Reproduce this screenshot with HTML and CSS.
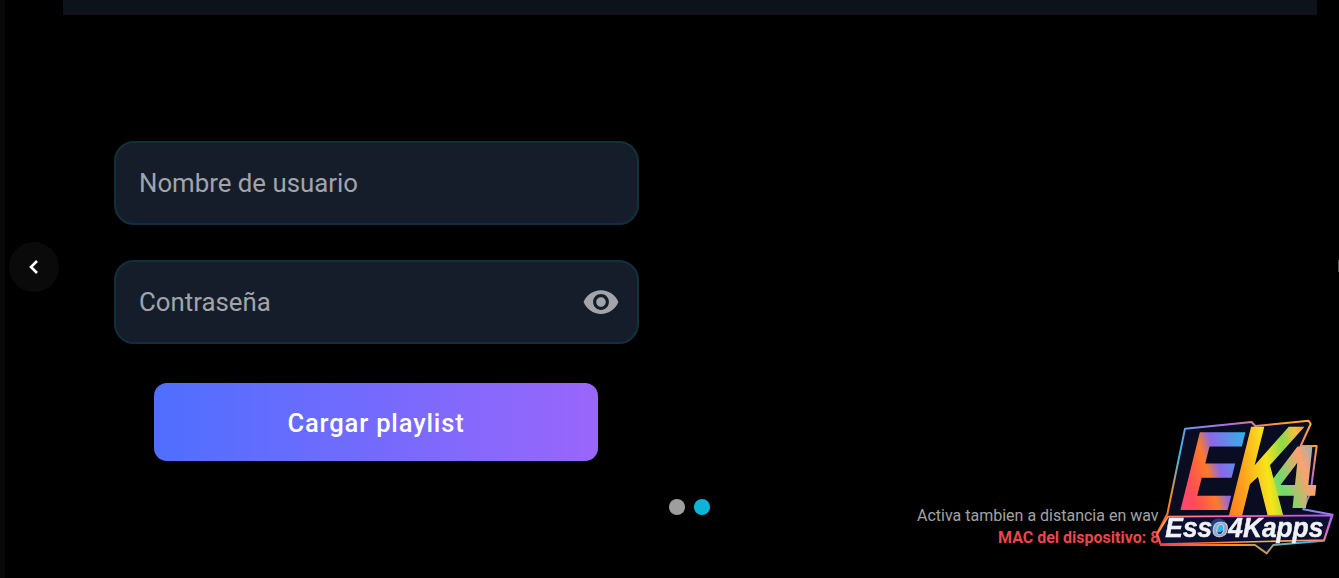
FILE: index.html
```html
<!DOCTYPE html>
<html lang="es">
<head>
  <meta charset="UTF-8">
  <meta name="viewport" content="width=device-width, initial-scale=1.0">
  <title>Cargar playlist</title>
  <link rel="stylesheet" href="styles.css">
</head>
<body>
  <div class="screen">
    <div class="topbar"></div>

    <form class="login">
      <div class="field">
        <span class="field-label">Nombre de usuario</span>
      </div>
      <div class="field">
        <span class="field-label">Contraseña</span>
        <svg class="eye" viewBox="0 0 24 24" width="38" height="38">
          <path fill="#a1a4ab" d="M12 4.5C7 4.5 2.73 7.61 1 12c1.73 4.39 6 7.5 11 7.5s9.27-3.11 11-7.5c-1.73-4.39-6-7.5-11-7.5zM12 17c-2.76 0-5-2.24-5-5s2.24-5 5-5 5 2.24 5 5-2.24 5-5 5zm0-8c-1.66 0-3 1.34-3 3s1.34 3 3 3 3-1.34 3-3-1.34-3-3-3z"/>
        </svg>
      </div>
      <button type="button" class="submit">Cargar playlist</button>
    </form>

    <div class="footer">
      <div class="dots">
        <span class="dot"></span>
        <span class="dot dot-active"></span>
      </div>
      <div class="hint">
        <div class="hint-text">Activa tambien a distancia en wav</div>
        <div class="hint-mac">MAC del dispositivo: 8</div>
      </div>
    </div>

    <!-- Carousel arrows -->
    <div class="nav-prev">
      <svg viewBox="0 0 24 24" width="24" height="24">
        <path d="M15 6l-6 6 6 6" fill="none" stroke="#fff" stroke-width="2.6"/>
      </svg>
    </div>
    <div class="nav-next"></div>

    <!-- Logo -->
    <svg class="logo" viewBox="0 0 597 504" width="199" height="168">
      <defs>
        <linearGradient id="rainbow" x1="0" y1="1" x2="1" y2="0">
          <stop offset="0" stop-color="#ff2d5a"/>
          <stop offset="0.25" stop-color="#ff8a1f"/>
          <stop offset="0.45" stop-color="#35b8f0"/>
          <stop offset="0.7" stop-color="#b46ae8"/>
          <stop offset="0.85" stop-color="#ff9a3c"/>
          <stop offset="1" stop-color="#ffb43c"/>
        </linearGradient>
        <linearGradient id="letterE" x1="0" y1="1" x2="0.8" y2="0">
          <stop offset="0" stop-color="#ff3fa0"/>
          <stop offset="0.3" stop-color="#ff4a5a"/>
          <stop offset="0.5" stop-color="#ff7a2a"/>
          <stop offset="0.62" stop-color="#8a68e8"/>
          <stop offset="1" stop-color="#22c0ea"/>
        </linearGradient>
        <linearGradient id="letterK" x1="0" y1="1" x2="1" y2="0.1">
          <stop offset="0" stop-color="#ff5a24"/>
          <stop offset="0.3" stop-color="#ffa01e"/>
          <stop offset="0.55" stop-color="#f7e41c"/>
          <stop offset="0.72" stop-color="#8cd94a"/>
          <stop offset="0.85" stop-color="#f5c23c"/>
          <stop offset="1" stop-color="#ff8a2e"/>
        </linearGradient>
        <linearGradient id="letter4" x1="0" y1="1" x2="1" y2="0">
          <stop offset="0" stop-color="#e8d93c"/>
          <stop offset="0.35" stop-color="#6fdc6a"/>
          <stop offset="0.65" stop-color="#ffa070"/>
          <stop offset="1" stop-color="#3cc4f0"/>
        </linearGradient>
        <linearGradient id="edge" x1="0" y1="1" x2="1" y2="0">
          <stop offset="0" stop-color="#ff3a3a"/>
          <stop offset="0.35" stop-color="#ffb43c"/>
          <stop offset="0.7" stop-color="#ff5fb0"/>
          <stop offset="1" stop-color="#b45cf0"/>
        </linearGradient>
      </defs>
      <path class="logo-base" stroke="url(#rainbow)" d="M135 56L335 36L346 48L506 32L512 42L482 108L530 108L512 245L490 298L578 314L552 392L400 405L380 430L345 405L62 405L50 372L82 312Z"/>
      <g class="logo-big">
        <text font-size="260" fill="url(#letter4)" stroke="url(#letter4)" transform="translate(376 290) skewX(-6)">4</text>
        <text font-size="330" fill="url(#letterE)" stroke="url(#letterE)" transform="translate(108 298) skewX(-14) scale(0.74 1)">E</text>
        <text font-size="385" fill="url(#letterK)" stroke="url(#letterK)" transform="translate(252 318) skewX(-14) scale(0.64 1)">K</text>
      </g>
      <path class="logo-plate" stroke="url(#edge)" d="M84 320L575 316L552 390L62 402L52 372Z"/>
      <circle class="logo-dot" cx="236" cy="351" r="26"/>
      <circle class="logo-dot-in" cx="236" cy="351" r="16"/>
      <text class="logo-name" x="76" y="380" font-size="82" textLength="474" lengthAdjust="spacingAndGlyphs">Ess<tspan fill="#9aa8c8">o</tspan>4Kapps</text>
    </svg>
  </div>
</body>
</html>
```

FILE: styles.css
```css
* {
  box-sizing: border-box;
}

body {
  margin: 0;
  background-color: #000;
  font-family: Roboto, "Liberation Sans", sans-serif;
}

.screen {
  position: relative;
  width: 1339px;
  height: 578px;
  overflow: hidden;
  border-left: 5px solid #070707;
  background-color: #000;
}

.topbar {
  height: 15px;
  margin: 0 22px 0 58px;
  background-color: #0e131b;
}

.login {
  display: flex;
  flex-direction: column;
  width: 525px;
  margin: 126px 0 0 109px;
}

.field {
  display: flex;
  align-items: center;
  justify-content: space-between;
  height: 84px;
  margin-bottom: 35px;
  padding: 0 17px 1px 23px;
  background-color: #161d2a;
  border: 2px solid #12303c;
  border-radius: 20px;
}

.field-label {
  color: #a1a4ab;
  font-size: 25.8px;
}

.eye {
  flex-shrink: 0;
  margin-top: 1px;
}

.submit {
  width: 444px;
  height: 78px;
  margin: 4px 0 0 40px;
  padding-top: 2px;
  color: #fff;
  font-family: inherit;
  font-size: 25.5px;
  font-weight: 500;
  letter-spacing: 0.85px;
  background: linear-gradient(90deg, #4f6fff, #9a66fb);
  border: none;
  border-radius: 13px;
}

.footer {
  display: flex;
  align-items: flex-start;
  margin-top: 38px;
  padding-left: 664px;
}

.dots {
  display: flex;
  gap: 9px;
}

.dot {
  width: 16px;
  height: 16px;
  background-color: #9e9e9e;
  border-radius: 50%;
}

.dot-active {
  background-color: #0db4d8;
}

.hint {
  margin-left: 207px;
  margin-top: 6px;
  font-size: 16px;
  line-height: 22px;
}

.hint-text {
  color: #a3a3a3;
  white-space: nowrap;
}

.hint-mac {
  padding-left: 81px;
  color: #e8474c;
  font-weight: 700;
  white-space: nowrap;
}

.nav-prev {
  position: absolute;
  left: 4px;
  top: 242px;
  display: flex;
  align-items: center;
  justify-content: center;
  width: 50px;
  height: 50px;
  background-color: #0a0a0a;
  border-radius: 50%;
}

.nav-next {
  position: absolute;
  right: 0;
  top: 260px;
  width: 1px;
  height: 12px;
  background-color: #555;
}

.logo {
  position: absolute;
  right: 0;
  bottom: 0;
  filter: blur(0.4px);
}

.logo-base {
  fill: #0a0d22;
  stroke-width: 6;
  stroke-linejoin: round;
}

.logo-big text {
  font-family: "Liberation Sans", sans-serif;
  font-weight: 700;
  stroke-width: 6;
  stroke-linejoin: miter;
}

.logo-plate {
  fill: #0c1030;
  stroke-width: 5;
  stroke-linejoin: round;
}

.logo-dot {
  fill: #2a3a7a;
}

.logo-dot-in {
  fill: #2fb4f0;
}

.logo-name {
  fill: #f1f2f6;
  stroke: #f1f2f6;
  stroke-width: 1.5;
  font-family: "Liberation Sans", sans-serif;
  font-weight: 700;
  font-style: italic;
}
```
